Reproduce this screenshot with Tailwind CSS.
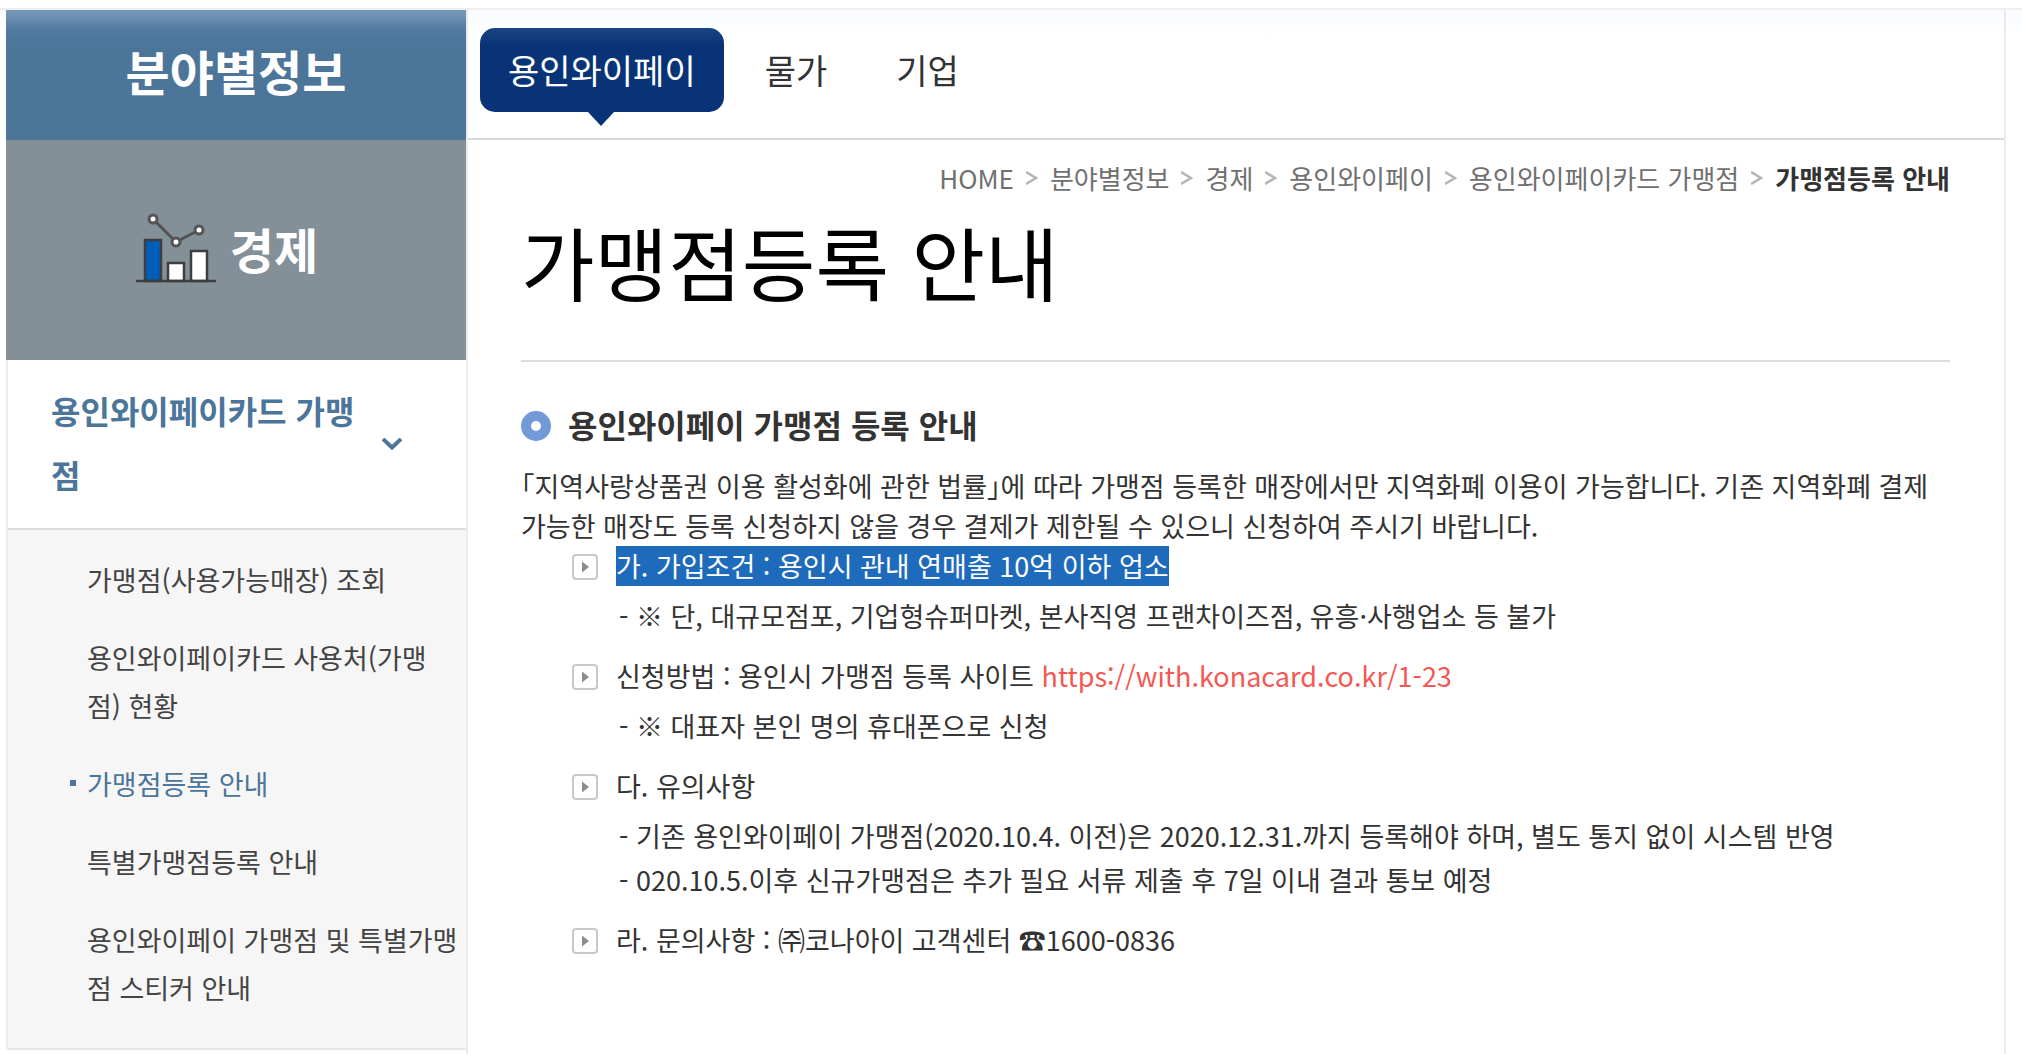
<!DOCTYPE html>
<html lang="ko">
<head>
    <meta charset="UTF-8">
    <meta name="viewport" content="width=device-width, initial-scale=1.0">
    <title>가맹점등록 안내</title>
    <script src="https://cdn.jsdelivr.net/npm/@tailwindcss/browser@4"></script>
</head>
<body class="bg-white font-['Noto_Sans_CJK_KR',sans-serif] text-[#333] overflow-x-hidden">
    <div class="mt-2 border-t-2 border-[#eee] pl-1.5 pr-4 bg-linear-to-b from-[#f9fbfe] to-white to-[28px]">
        <div class="flex min-h-[1044px] border-r-2 border-[#ebebeb]">

            <!-- Sidebar -->
            <aside class="w-[462px] shrink-0 border-r-2 border-[#ebebeb]">
                <h2 class="flex h-[130px] items-center justify-center bg-linear-to-b from-[#7a9ab8] via-[#527aa2] via-[20px] to-[#4b7599] to-[36px] pb-2.5 text-5xl font-bold text-white">분야별정보</h2>
                <div class="flex h-[220px] items-center justify-center gap-3.5 bg-[#839098] pr-[18px] pb-1">
                    <svg class="h-[72px] w-20" viewBox="0 0 80 72" fill="none" stroke="#3c3e40" stroke-width="2.5">
                        <path d="M17 7L40 30L63 18" stroke="#505254" stroke-width="3"/>
                        <g fill="#fff" stroke="#555" stroke-width="3">
                            <circle cx="17" cy="7" r="4"/>
                            <circle cx="40" cy="30" r="4"/>
                            <circle cx="63" cy="18" r="4"/>
                        </g>
                        <rect x="9" y="28" width="16" height="41" fill="#005eb8"/>
                        <rect x="32" y="51" width="16" height="18" fill="#fff"/>
                        <rect x="55" y="39" width="16" height="30" fill="#fff"/>
                        <path d="M0 69H80"/>
                    </svg>
                    <h3 class="text-5xl font-bold text-white">경제</h3>
                </div>
                <nav class="border-l-2 border-[#ebebeb]">
                    <a href="#" class="flex items-center border-b-2 border-[#ddd] py-[18px] pl-[43px] pr-16 text-[32px] leading-16 font-bold text-[#4b7599]">
                        <span class="w-[331px] pb-1 break-all">용인와이페이카드 가맹점</span>
                        <svg class="h-3 w-5 shrink-0" viewBox="0 0 20 12" fill="none" stroke="#4b7599" stroke-width="4"><path d="M1 1L10 9.500L19 1"/></svg>
                    </a>
                    <ul class="flex flex-col gap-[30px] border-b-2 border-[#e6e6e6] bg-[#f6f6f6] pt-[26px] pb-9 pl-[79px] text-[27px] leading-12 text-[#444]">
                        <li><a href="#">가맹점(사용가능매장) 조회</a></li>
                        <li class="pr-5"><a href="#">용인와이페이카드 사용처(가맹점) 현황</a></li>
                        <li class="relative text-[#4b7599] before:absolute before:top-5 before:-left-[17px] before:size-1.5 before:bg-[#4b7599]"><a href="#">가맹점등록 안내</a></li>
                        <li><a href="#">특별가맹점등록 안내</a></li>
                        <li><a href="#">용인와이페이 가맹점 및 특별가맹점 스티커 안내</a></li>
                    </ul>
                </nav>
            </aside>

            <!-- Content -->
            <main class="min-w-0 flex-1">
                <nav class="flex h-[130px] items-start gap-[13px] border-b-2 border-[#d9d9d9] pt-[18px] pl-3 text-[34px] leading-[84px]">
                    <a href="#" class="relative rounded-[15px] bg-linear-to-b from-[#1a4583] to-[#083477] to-[18px] px-7 text-white">용인와이페이
                        <svg class="absolute top-full left-[108px] h-3.5 w-[26px]" viewBox="0 0 26 14" fill="#083477"><path d="M0 0H26L13 14Z"/></svg>
                    </a>
                    <a href="#" class="px-7">물가</a>
                    <a href="#" class="px-7">기업</a>
                </nav>

                <div class="pr-[54px] pl-[53px]">
                    <ol class="flex items-center justify-end gap-3 pt-[18px] text-[26px] leading-10 text-[#707070]">
                        <li><a href="#">HOME</a></li>
                        <li><svg class="h-3.5 w-3" viewBox="0 0 12 14" fill="none" stroke="#b5b5b5" stroke-width="2.500"><path d="M0 1L10 7L0 13"/></svg></li>
                        <li><a href="#">분야별정보</a></li>
                        <li><svg class="h-3.5 w-3" viewBox="0 0 12 14" fill="none" stroke="#b5b5b5" stroke-width="2.500"><path d="M0 1L10 7L0 13"/></svg></li>
                        <li><a href="#">경제</a></li>
                        <li><svg class="h-3.5 w-3" viewBox="0 0 12 14" fill="none" stroke="#b5b5b5" stroke-width="2.500"><path d="M0 1L10 7L0 13"/></svg></li>
                        <li><a href="#">용인와이페이</a></li>
                        <li><svg class="h-3.5 w-3" viewBox="0 0 12 14" fill="none" stroke="#b5b5b5" stroke-width="2.500"><path d="M0 1L10 7L0 13"/></svg></li>
                        <li><a href="#">용인와이페이카드 가맹점</a></li>
                        <li><svg class="h-3.5 w-3" viewBox="0 0 12 14" fill="none" stroke="#b5b5b5" stroke-width="2.500"><path d="M0 1L10 7L0 13"/></svg></li>
                        <li class="font-bold text-[#333]">가맹점등록 안내</li>
                    </ol>
                    <h1 class="border-b-2 border-[#ddd] pt-3 pb-[50px] text-[80px] leading-[100px] text-black">가맹점등록 안내</h1>

                    <h2 class="mt-10 flex items-center gap-[17px] text-[32px] leading-11 font-bold">
                        <svg class="size-[30px]" viewBox="0 0 30 30"><circle cx="15" cy="15" r="15" fill="#7299d8"/><circle cx="15" cy="15" r="5" fill="#fff"/></svg>
                        <span class="pb-1">용인와이페이 가맹점 등록 안내</span>
                    </h2>
                    <p class="mt-4 text-[27px] leading-10 [font-feature-settings:'halt']">「지역사랑상품권 이용 활성화에 관한 법률」에 따라 가맹점 등록한 매장에서만 지역화폐 이용이 가능합니다. 기존 지역화폐 결제 가능한 매장도 등록 신청하지 않을 경우 결제가 제한될 수 있으니 신청하여 주시기 바랍니다.</p>

                    <ul class="flex flex-col gap-[18px] pl-[51px] text-[27px] leading-10">
                        <li class="flex gap-[18px]">
                            <svg class="mt-2 size-[26px] shrink-0" viewBox="0 0 26 26"><rect x="1" y="1" width="24" height="24" rx="3" fill="#fff" stroke="#c8c8c8" stroke-width="2"/><path d="M10 7.500L17 13L10 18.500Z" fill="#8c8c8c"/></svg>
                            <div>
                                <span class="block w-fit bg-[#1f6bbb] text-white">가. 가입조건 : 용인시 관내 연매출 10억 이하 업소</span>
                                <ul class="mt-2 pl-[3px] leading-11">
                                    <li>- ※ 단, 대규모점포, 기업형슈퍼마켓, 본사직영 프랜차이즈점, 유흥·사행업소 등 불가</li>
                                </ul>
                            </div>
                        </li>
                        <li class="flex gap-[18px]">
                            <svg class="mt-2 size-[26px] shrink-0" viewBox="0 0 26 26"><rect x="1" y="1" width="24" height="24" rx="3" fill="#fff" stroke="#c8c8c8" stroke-width="2"/><path d="M10 7.500L17 13L10 18.500Z" fill="#8c8c8c"/></svg>
                            <div>
                                신청방법 : 용인시 가맹점 등록 사이트 <a href="https://with.konacard.co.kr/1-23" class="text-[#f55753]">https://with.konacard.co.kr/1-23</a>
                                <ul class="mt-2 pl-[3px] leading-11">
                                    <li>- ※ 대표자 본인 명의 휴대폰으로 신청</li>
                                </ul>
                            </div>
                        </li>
                        <li class="flex gap-[18px]">
                            <svg class="mt-2 size-[26px] shrink-0" viewBox="0 0 26 26"><rect x="1" y="1" width="24" height="24" rx="3" fill="#fff" stroke="#c8c8c8" stroke-width="2"/><path d="M10 7.500L17 13L10 18.500Z" fill="#8c8c8c"/></svg>
                            <div>
                                다. 유의사항
                                <ul class="mt-2 pl-[3px] leading-11">
                                    <li>- 기존 용인와이페이 가맹점(2020.10.4. 이전)은 2020.12.31.까지 등록해야 하며, 별도 통지 없이 시스템 반영</li>
                                    <li>- 020.10.5.이후 신규가맹점은 추가 필요 서류 제출 후 7일 이내 결과 통보 예정</li>
                                </ul>
                            </div>
                        </li>
                        <li class="flex gap-[18px]">
                            <svg class="mt-2 size-[26px] shrink-0" viewBox="0 0 26 26"><rect x="1" y="1" width="24" height="24" rx="3" fill="#fff" stroke="#c8c8c8" stroke-width="2"/><path d="M10 7.500L17 13L10 18.500Z" fill="#8c8c8c"/></svg>
                            <div>라. 문의사항 : ㈜코나아이 고객센터 ☎1600-0836</div>
                        </li>
                    </ul>
                </div>
            </main>
        </div>
    </div>
</body>
</html>
